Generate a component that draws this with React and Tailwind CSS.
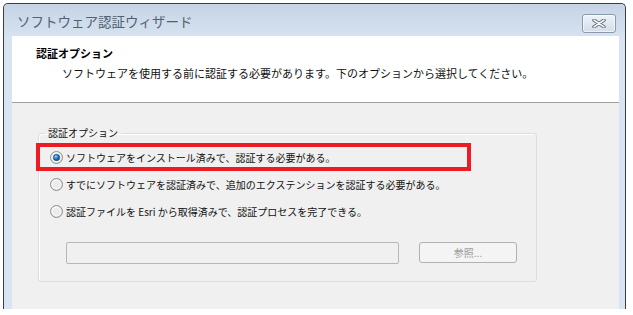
import React from "react";

const jp = { fontFamily: '"Noto Sans CJK JP", "Noto Sans", sans-serif' };

function Radio({ checked, id }) {
  return (
    <svg width="13" height="13" viewBox="0 0 13 13" className="shrink-0">
      <defs>
        <linearGradient id={`ring-${id}`} x1="0" y1="0" x2="1" y2="1">
          <stop offset="0" stopColor="#f6f6f6" />
          <stop offset="1" stopColor="#d4d4d4" />
        </linearGradient>
        <radialGradient id={`dot-${id}`} cx="0.4" cy="0.35" r="0.7">
          <stop offset="0" stopColor="#9fd3fb" />
          <stop offset="0.45" stopColor="#2b7ed0" />
          <stop offset="1" stopColor="#0d3e78" />
        </radialGradient>
      </defs>
      <circle cx="6.5" cy="6.5" r="6" fill={`url(#ring-${id})`} stroke="#8e8f8f" strokeWidth="1" />
      <circle cx="6.5" cy="6.5" r="4.3" fill="#ececec" stroke="#ffffff" strokeWidth="0.8" />
      {checked && (
        <circle cx="6.5" cy="6.5" r="3.2" fill={`url(#dot-${id})`} stroke="#17457c" strokeWidth="0.6" />
      )}
    </svg>
  );
}

function CloseButton() {
  return (
    <div className="w-[34px] h-[19px] mt-[10px] rounded-[3px] border border-[#8a9aad] bg-gradient-to-b from-[#eef3f9] to-[#d3dde9] flex items-center justify-center shadow-[inset_0_0_0_1px_rgba(255,255,255,0.6)]">
      <svg width="14" height="9" viewBox="0 0 14 9">
        <path d="M2 1.2 L12 7.8 M12 1.2 L2 7.8" stroke="#5c6878" strokeWidth="3.4" strokeLinecap="round" />
        <path d="M2 1.2 L12 7.8 M12 1.2 L2 7.8" stroke="#ffffff" strokeWidth="1.6" strokeLinecap="round" />
      </svg>
    </div>
  );
}

export default function App() {
  const options = [
    "ソフトウェアをインストール済みで、認証する必要がある。",
    "すでにソフトウェアを認証済みで、追加のエクステンションを認証する必要がある。",
    "認証ファイルを Esri から取得済みで、認証プロセスを完了できる。",
  ];

  return (
    <div className="w-[633px] h-[315px] bg-white relative overflow-hidden" style={jp}>
      <div className="ml-[3px] mt-[3px] w-[623px] h-[306px] border-t border-l border-r border-[#3a3d42] rounded-t-[5px] bg-[#d8e4f1] flex flex-col">
        {/* Title bar */}
        <div className="h-[32px] flex justify-between pl-[13px] pr-[9px] rounded-t-[5px] bg-gradient-to-b from-[#c5d4e6] to-[#d6e2ef]">
          <span className="text-[13.5px] leading-[32px] text-[#526073] pt-[1px]">
            ソフトウェア認証ウィザード
          </span>
          <CloseButton />
        </div>

        <div className="ml-[8px] mr-[6px] flex-1 flex flex-col">
          {/* Header */}
          <div className="h-[67px] bg-white border-b border-[#a0a0a0] flex flex-col pl-[24px] pt-[10px]">
            <div className="text-[11px] leading-[14px] font-bold text-black">認証オプション</div>
            <div className="text-[11px] leading-[14px] text-[#111] ml-[26px] mt-[6px]">
              ソフトウェアを使用する前に認証する必要があります。下のオプションから選択してください。
            </div>
          </div>

          {/* Body */}
          <div className="flex-1 bg-[#f0f0f0] pl-[26px] pt-[24px]">
            <fieldset className="w-[499px] border border-[#d5dfe5] rounded-[3px] pl-[11px] pt-[5px] pb-[17px] shadow-[inset_1px_1px_0_#ffffff]">
              <legend className="-ml-[5px] px-[3px] text-[10px] leading-[12px] text-[#111]">
                認証オプション
              </legend>
              {options.map((text, i) => (
                <div key={i} className="h-[27px] flex items-center gap-[3px]">
                  <Radio checked={i === 0} id={i} />
                  <span className="text-[10px] leading-[12px] text-[#111]">{text}</span>
                </div>
              ))}
              <div className="flex items-start mt-[17px] ml-[16px] gap-[20px]">
                <div className="w-[333px] h-[22px] rounded-[2px] border border-[#b4b8bd] bg-[#f0f0f0]" />
                <div className="w-[98px] h-[21px] rounded-[3px] border border-[#adb2b5] bg-[#f4f4f4] flex items-center justify-center text-[10px] text-[#9c9c9c]">
                  参照...
                </div>
              </div>
            </fieldset>
          </div>
        </div>
      </div>

      {/* annotation */}
      <div className="absolute left-[36px] top-[143px] w-[435px] h-[28px] border-[4px] border-[#ed1c24]" />
    </div>
  );
}
